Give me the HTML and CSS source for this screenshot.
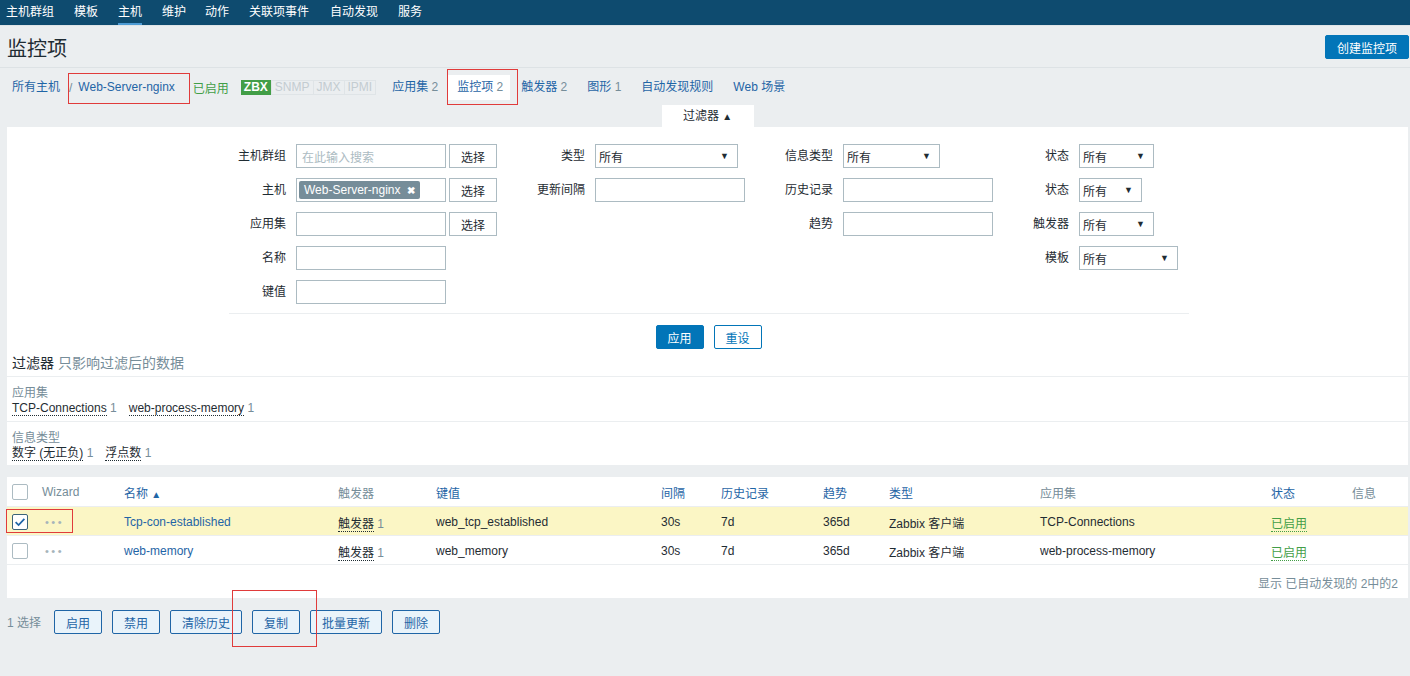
FILE: index.html
```html
<!DOCTYPE html>
<html lang="zh">
<head>
<meta charset="utf-8">
<title>监控项</title>
<link rel="stylesheet" href="styles.css">
</head>
<body>
<nav class="topnav">
  <a class="nav-item first">主机群组</a>
  <a class="nav-item">模板</a>
  <a class="nav-item active">主机</a>
  <a class="nav-item">维护</a>
  <a class="nav-item">动作</a>
  <a class="nav-item">关联项事件</a>
  <a class="nav-item">自动发现</a>
  <a class="nav-item">服务</a>
</nav>

<header class="page-header">
  <h1>监控项</h1>
  <button class="btn-primary">创建监控项</button>
</header>

<div class="breadcrumbs">
  <a class="crumb link">所有主机</a>
  <span class="sep">/</span>
  <a class="crumb link host">Web-Server-nginx</a>
  <span class="status-green">已启用</span>
  <span class="badge-zbx">ZBX</span>
  <span class="badge-grey"><span>SNMP</span><span>JMX</span><span>IPMI</span></span>
  <a class="crumb link tab first-tab">应用集 <span class="count">2</span></a>
  <a class="crumb link tab active">监控项 <span class="count">2</span></a>
  <a class="crumb link tab">触发器 <span class="count">2</span></a>
  <a class="crumb link tab">图形 <span class="count">1</span></a>
  <a class="crumb link tab">自动发现规则</a>
  <a class="crumb link tab">Web 场景</a>
</div>

<div class="filter-tabs">
  <span class="filter-tab">过滤器 <span class="arrow">▲</span></span>
</div>

<section class="filter-panel">
  <div class="filter-grid">
    <label class="lbl">主机群组</label>
    <div class="ctl"><span class="input placeholder">在此输入搜索</span><button class="btn-select">选择</button></div>
    <label class="lbl">类型</label>
    <div class="ctl"><span class="select w143">所有<i class="caret">▼</i></span></div>
    <label class="lbl">信息类型</label>
    <div class="ctl"><span class="select w97">所有<i class="caret">▼</i></span></div>
    <label class="lbl">状态</label>
    <div class="ctl"><span class="select w75">所有<i class="caret">▼</i></span></div>

    <label class="lbl">主机</label>
    <div class="ctl"><span class="input multi"><span class="chip">Web-Server-nginx <b class="x">✖</b></span></span><button class="btn-select">选择</button></div>
    <label class="lbl">更新间隔</label>
    <div class="ctl"><span class="input"></span></div>
    <label class="lbl">历史记录</label>
    <div class="ctl"><span class="input"></span></div>
    <label class="lbl">状态</label>
    <div class="ctl"><span class="select w63">所有<i class="caret">▼</i></span></div>

    <label class="lbl">应用集</label>
    <div class="ctl"><span class="input"></span><button class="btn-select">选择</button></div>
    <span></span>
    <span></span>
    <label class="lbl">趋势</label>
    <div class="ctl"><span class="input"></span></div>
    <label class="lbl">触发器</label>
    <div class="ctl"><span class="select w75">所有<i class="caret">▼</i></span></div>

    <label class="lbl">名称</label>
    <div class="ctl"><span class="input"></span></div>
    <span></span><span></span><span></span><span></span>
    <label class="lbl">模板</label>
    <div class="ctl"><span class="select w99">所有<i class="caret">▼</i></span></div>

    <label class="lbl">键值</label>
    <div class="ctl"><span class="input"></span></div>
  </div>
  <hr class="filter-hr">
  <div class="filter-buttons">
    <button class="btn-primary small">应用</button>
    <button class="btn-outline">重设</button>
  </div>
  <div class="subfilter-title"><span class="dark">过滤器</span> 只影响过滤后的数据</div>
  <div class="subfilter">
    <div class="sub-label">应用集</div>
    <div class="sub-links"><a class="dotted">TCP-Connections</a> <span class="count">1</span><a class="dotted gapped">web-process-memory</a> <span class="count">1</span></div>
  </div>
  <div class="subfilter">
    <div class="sub-label">信息类型</div>
    <div class="sub-links"><a class="dotted">数字 (无正负)</a> <span class="count">1</span><a class="dotted gapped">浮点数</a> <span class="count">1</span></div>
  </div>
</section>

<section class="table-panel">
  <table class="items">
    <colgroup>
      <col style="width:30px"><col style="width:82px"><col style="width:214px"><col style="width:98px">
      <col style="width:225px"><col style="width:60px"><col style="width:102px"><col style="width:66px">
      <col style="width:151px"><col style="width:231px"><col style="width:81px"><col style="width:61px">
    </colgroup>
    <thead>
      <tr>
        <th><span class="cb"></span></th>
        <th class="grey">Wizard</th>
        <th class="link">名称 <span class="sort">▲</span></th>
        <th class="grey">触发器</th>
        <th class="link">键值</th>
        <th class="link">间隔</th>
        <th class="link">历史记录</th>
        <th class="link">趋势</th>
        <th class="link">类型</th>
        <th class="grey">应用集</th>
        <th class="link">状态</th>
        <th class="grey">信息</th>
      </tr>
    </thead>
    <tbody>
      <tr class="selected">
        <td><span class="cb checked"><svg viewBox="0 0 16 16" width="14" height="14"><path d="M3 8.2 L6.4 11.5 L13 4.5" fill="none" stroke="#1f65a6" stroke-width="2"/></svg></span></td>
        <td class="dots">•••</td>
        <td><a class="link">Tcp-con-established</a></td>
        <td><a class="dotted">触发器</a> <span class="count">1</span></td>
        <td>web_tcp_established</td>
        <td>30s</td>
        <td>7d</td>
        <td>365d</td>
        <td>Zabbix 客户端</td>
        <td>TCP-Connections</td>
        <td><a class="dotted green">已启用</a></td>
        <td></td>
      </tr>
      <tr>
        <td><span class="cb"></span></td>
        <td class="dots">•••</td>
        <td><a class="link">web-memory</a></td>
        <td><a class="dotted">触发器</a> <span class="count">1</span></td>
        <td>web_memory</td>
        <td>30s</td>
        <td>7d</td>
        <td>365d</td>
        <td>Zabbix 客户端</td>
        <td>web-process-memory</td>
        <td><a class="dotted green">已启用</a></td>
        <td></td>
      </tr>
    </tbody>
  </table>
  <div class="table-footer">显示 已自动发现的 2中的2</div>
</section>

<div class="actions">
  <span class="selected-count">1 选择</span>
  <button class="btn-action">启用</button>
  <button class="btn-action">禁用</button>
  <button class="btn-action">清除历史</button>
  <button class="btn-action">复制</button>
  <button class="btn-action">批量更新</button>
  <button class="btn-action">删除</button>
</div>

<div class="mark mark-host"></div>
<div class="mark mark-tab"></div>
<div class="mark mark-row"></div>
<div class="mark mark-copy"></div>
</body>
</html>
```

FILE: styles.css
```css
* { box-sizing: border-box; }
html, body { margin: 0; padding: 0; }
body {
  background: #ebeef0;
  font-family: "Liberation Sans", "Noto Sans CJK SC", sans-serif;
  font-size: 12px;
  color: #1f2c33;
  width: 1410px;
  height: 676px;
  overflow: hidden;
  position: relative;
}
a { text-decoration: none; cursor: pointer; }
button { font-family: inherit; font-size: 12px; cursor: pointer; }

/* top nav */
.topnav {
  height: 26px;
  background: #0e4b6f;
  display: flex;
  align-items: stretch;
  border-bottom: 1px solid #dfe4e7;
}
.nav-item {
  color: #ffffff;
  padding: 0 10px;
  line-height: 24px;
  border-bottom: 2px solid transparent;
}
.nav-item.first { padding-left: 6px; }
.nav-item:nth-child(5) { padding-left: 9px; }
.nav-item:nth-child(6) { padding-right: 11px; }
.nav-item.active { border-bottom-color: #4d9bd4; padding: 0; margin: 0 10px 0 10px; }

/* header */
.page-header {
  height: 42px;
  display: flex;
  align-items: center;
  justify-content: space-between;
  padding: 0 1px 0 7px;
  border-bottom: 1px solid #dde2e5;
}
.page-header h1 {
  margin: 0;
  font-size: 20px;
  font-weight: normal;
  color: #1f2c33;
  padding-top: 2px;
}
.btn-primary {
  background: #0275b8;
  border: 1px solid #0275b8;
  color: #fff;
  height: 24px;
  padding: 0 11px;
  border-radius: 2px;
  margin-top: 1px;
}
.btn-primary.small { width: 48px; padding: 0; margin: 0; }

/* breadcrumbs */
.breadcrumbs {
  height: 37px;
  display: flex;
  align-items: center;
  padding-left: 12px;
  padding-top: 2px;
}
.link { color: #1f65a6; }
.crumb { line-height: 25px; }
.sep { color: #768d99; margin: 0 4px 0 9px; }
.host { margin-right: 18px; margin-left: 2px; }
.status-green { color: #429e47; margin-right: 12px; }
.badge-zbx {
  background: #429e47;
  color: #fff;
  font-weight: bold;
  padding: 0 3px;
  line-height: 15px;
  height: 15px;
  font-size: 12px;
  margin-right: 0;
}
.badge-grey {
  display: flex;
  border: 1px solid #dfe4e7;
  height: 15px;
  align-items: center;
  color: #c3ccd1;
  margin-right: 16px;
}
.badge-grey span { padding: 0 3px; line-height: 13px; }
.badge-grey span + span { border-left: 1px solid #dfe4e7; }
.count { color: #768d99; }
.tab { padding: 0 9px; margin-right: 2px; }
.tab.first-tab { padding-left: 0; margin-right: 1px; }
.tab.active { background: #ffffff; color: #1f65a6; padding: 0 7px 0 9px; }

/* filter tab */
.filter-tabs {
  display: flex;
  justify-content: center;
  height: 22px;
  padding-left: 5px;
}
.filter-tab {
  background: #fff;
  width: 92px;
  text-align: center;
  line-height: 22px;
  color: #1f2c33;
}
.filter-tab .arrow { font-size: 10px; }

/* filter panel */
.filter-panel {
  background: #fff;
  margin: 0 2px 0 7px;
  padding-top: 17px;
}
.filter-grid {
  display: grid;
  grid-template-columns: 96px 201px 98px 150px 98px 150px 86px 130px;
  grid-auto-rows: 24px;
  row-gap: 10px;
  margin-left: 193px;
}
.lbl {
  text-align: right;
  padding-right: 10px;
  line-height: 24px;
  white-space: nowrap;
}
.ctl { display: flex; align-items: center; }
.input {
  display: inline-flex;
  align-items: center;
  width: 150px;
  height: 24px;
  border: 1px solid #acbbc2;
  background: #fff;
  padding: 0 5px;
}
.input.placeholder { color: #acbbc2; }
.input.multi { padding: 0 2px; }
.chip {
  background: #768d99;
  color: #fff;
  padding: 0 5px;
  line-height: 18px;
  height: 18px;
  border-radius: 2px;
  white-space: nowrap;
}
.chip .x { font-size: 10px; margin-left: 3px; }
.btn-select {
  height: 24px;
  width: 48px;
  margin-left: 3px;
  background: #fff;
  border: 1px solid #acbbc2;
  color: #1f2c33;
  padding: 0;
}
.select {
  display: inline-flex;
  align-items: center;
  justify-content: space-between;
  height: 24px;
  border: 1px solid #acbbc2;
  background: #fff;
  padding: 0 8px 0 3px;
}
.caret { font-style: normal; font-size: 9px; color: #1f2c33; }
.w143 { width: 143px; }
.w97 { width: 97px; }
.w75 { width: 75px; }
.w63 { width: 63px; }
.w99 { width: 99px; }

.filter-hr {
  width: 960px;
  margin: 9px auto 0;
  border: 0;
  border-top: 1px solid #ebeef0;
  height: 0;
  position: relative;
  left: 1px;
}
.filter-buttons {
  display: flex;
  justify-content: center;
  gap: 10px;
  margin-top: 11px;
  padding-left: 2px;
}
.btn-outline {
  height: 24px;
  width: 48px;
  padding: 0;
  background: #fff;
  border: 1px solid #0275b8;
  color: #0275b8;
  border-radius: 2px;
}
.subfilter-title {
  font-size: 14px;
  color: #768d99;
  padding: 5px 5px 0;
  height: 28px;
  line-height: 18px;
  border-bottom: 1px solid #ebeef0;
}
.subfilter-title .dark { color: #1f2c33; }
.subfilter {
  padding: 9px 5px 5px;
  height: 44px;
  line-height: 15px;
}
.subfilter + .subfilter { border-top: 1px solid #ebeef0; height: 44px; }
.sub-label { color: #768d99; }
.dotted {
  color: #1f2c33;
  border-bottom: 1px dotted #1f2c33;
}
.dotted.green { color: #429e47; border-bottom-color: #429e47; }
.gapped { margin-left: 12px; }

/* table */
.table-panel {
  background: #fff;
  margin: 12px 2px 0 7px;
  height: 121px;
}
.items {
  width: 1401px;
  table-layout: fixed;
  border-collapse: collapse;
}
.items th, .items td {
  padding: 0 5px;
  text-align: left;
  white-space: nowrap;
  overflow: hidden;
}
.items th {
  font-weight: normal;
  height: 29px;
  padding-top: 2px;
  border-bottom: 1px solid #ebeef0;
}
.items td {
  height: 29px;
  border-bottom: 1px solid #ebeef0;
  padding-top: 3px;
}
.items th.grey { color: #768d99; }
.items th.link { color: #1f65a6; }
.sort { font-size: 10px; }
.items tr.selected td { background: #fbf6c5; }
.cb {
  display: inline-flex;
  align-items: center;
  justify-content: center;
  width: 16px;
  height: 16px;
  border: 1px solid #acbbc2;
  border-radius: 2px;
  background: #fff;
  vertical-align: middle;
}
.cb.checked { border-color: #3c6478; }
.dots { color: #a6b4bb; font-size: 11px; letter-spacing: 2.5px; padding-left: 8px !important; }
.table-footer {
  text-align: right;
  color: #768d99;
  padding: 9px 10px 0 0;
}

/* actions */
.actions {
  display: flex;
  align-items: center;
  gap: 10px;
  padding: 12px 0 0 7px;
}
.selected-count { color: #768d99; margin-right: 3px; margin-top: -2px; }
.btn-action {
  height: 24px;
  padding: 0 11px;
  min-width: 48px;
  background: #e9f3fa;
  border: 1px solid #1f65a6;
  color: #1f65a6;
  border-radius: 2px;
}

/* annotation boxes drawn over the screenshot */
.mark {
  position: absolute;
  border: 1px solid #e03b3b;
  pointer-events: none;
}
.mark-host { left: 68px; top: 73px; width: 122px; height: 31px; }
.mark-tab { left: 447px; top: 69px; width: 71px; height: 36px; }
.mark-row { left: 6px; top: 509px; width: 67px; height: 24px; }
.mark-copy { left: 232px; top: 590px; width: 85px; height: 57px; }
```
